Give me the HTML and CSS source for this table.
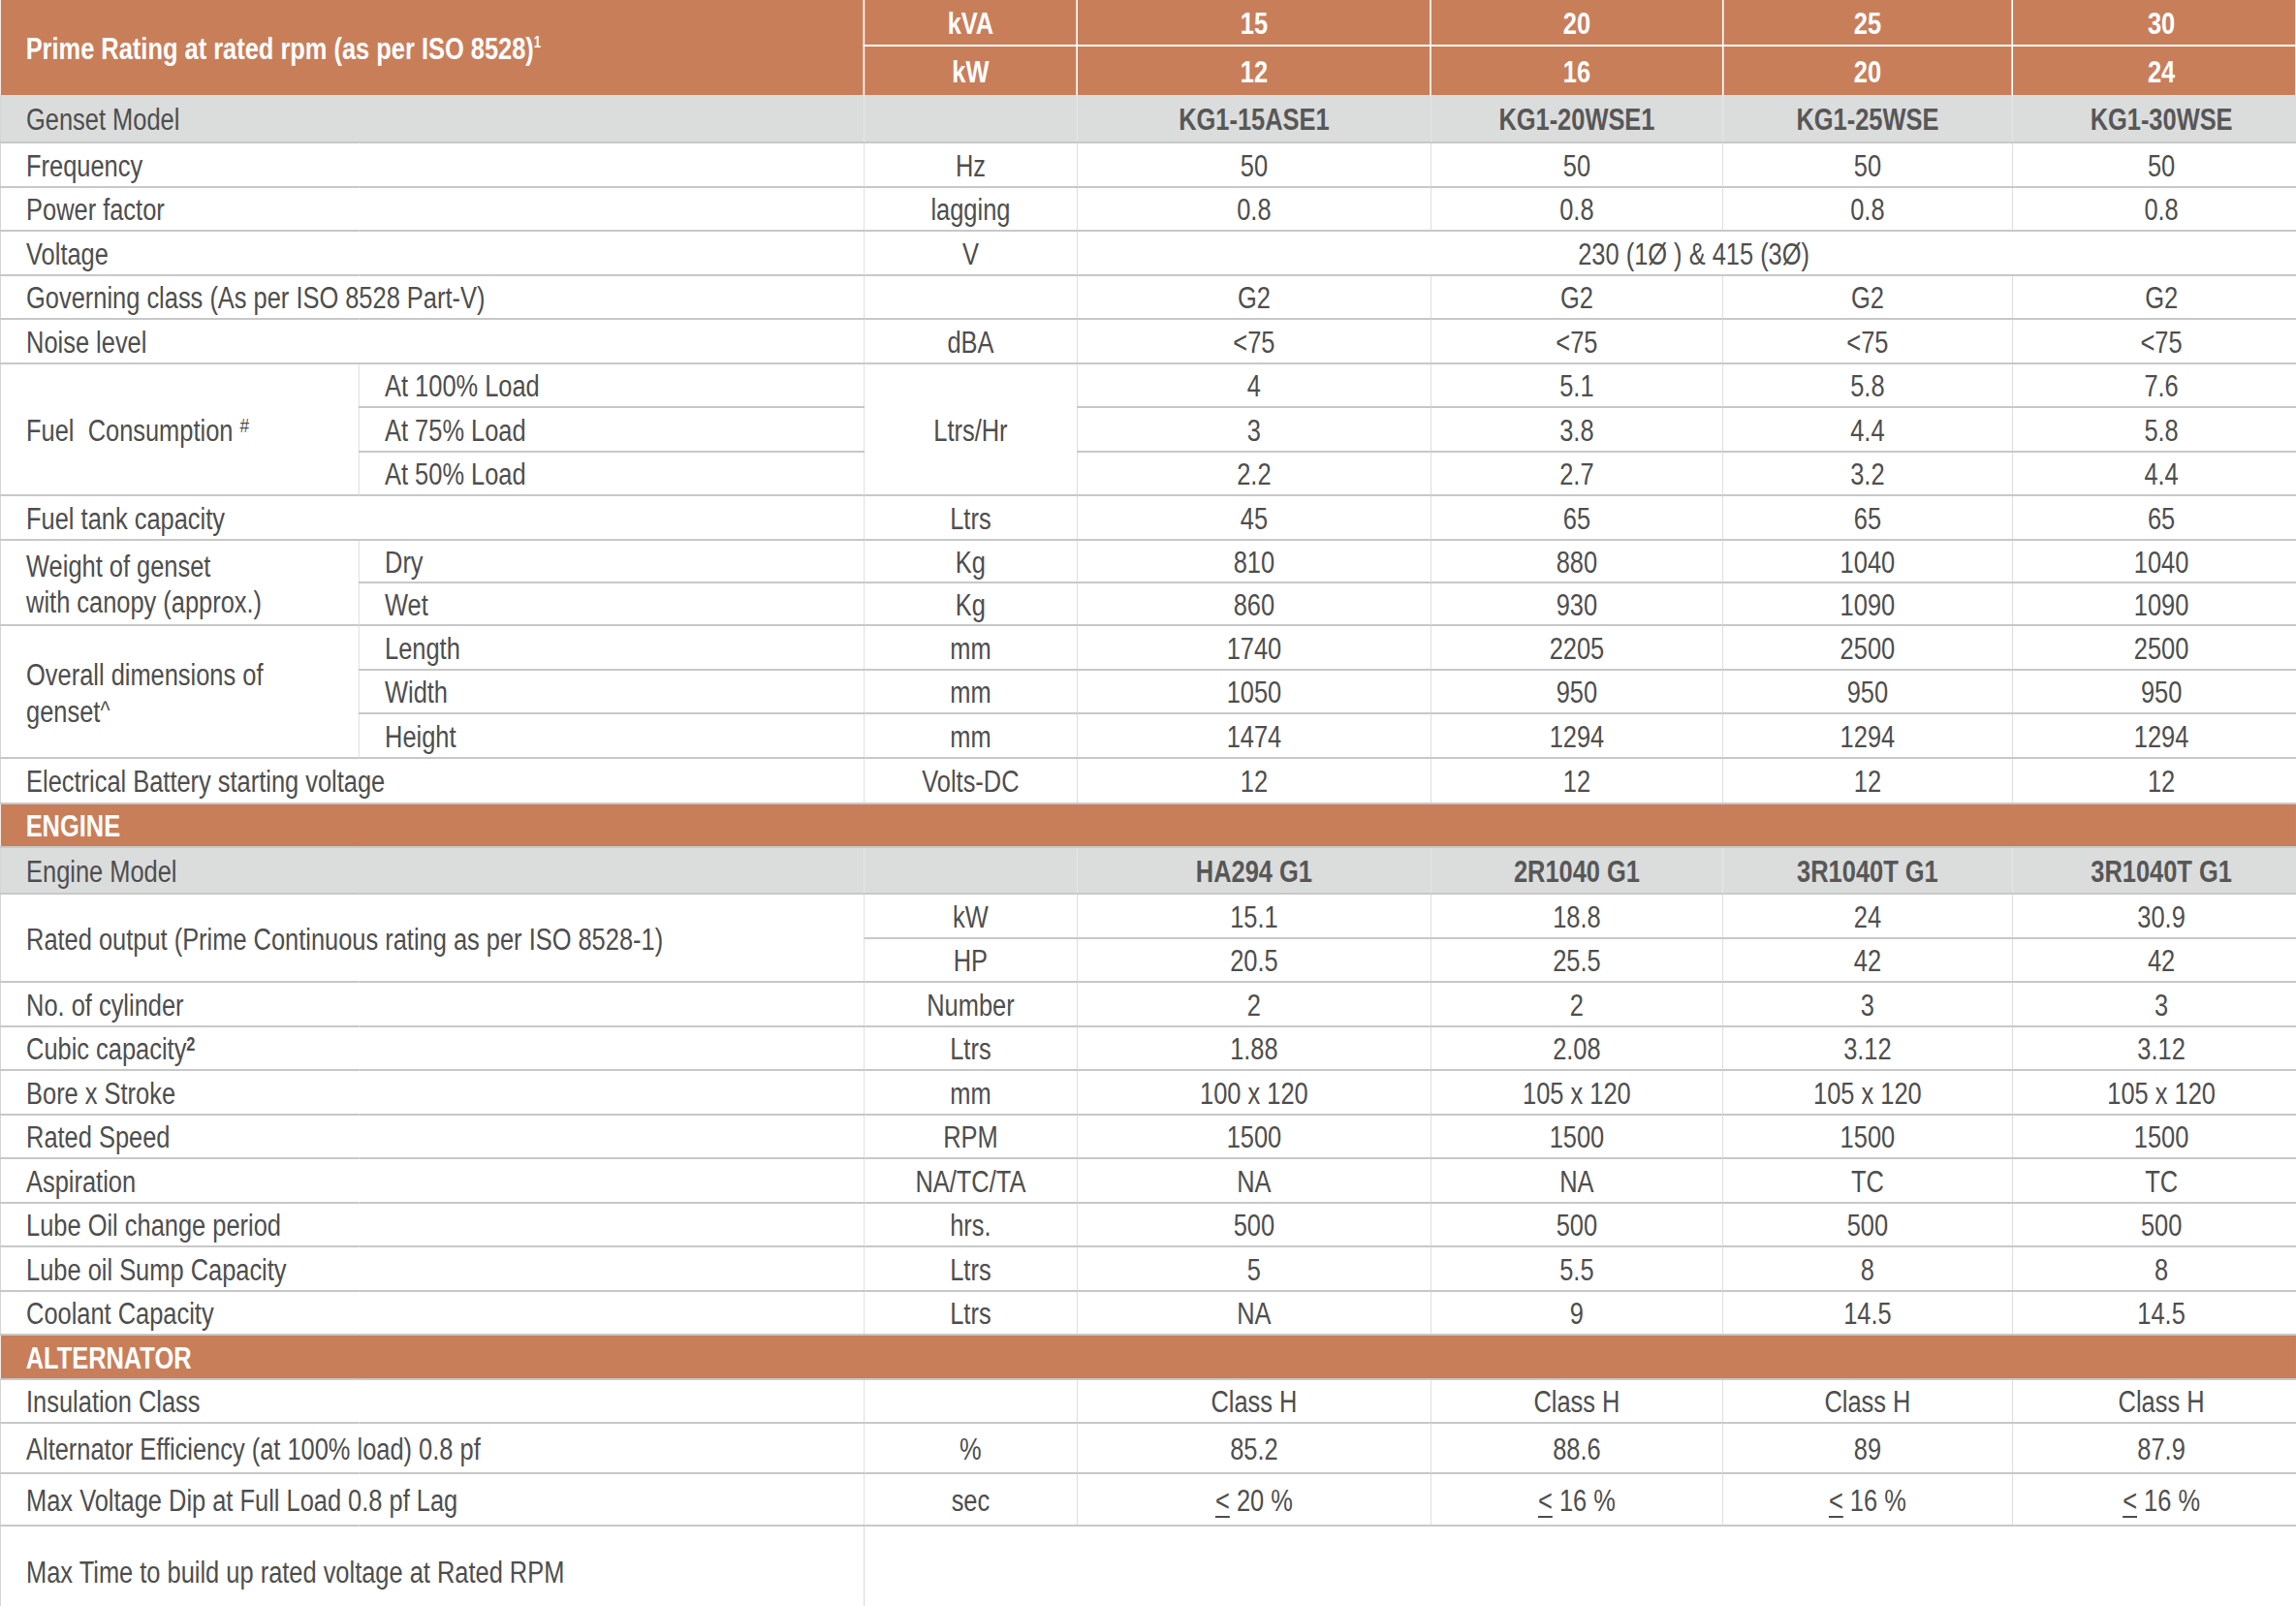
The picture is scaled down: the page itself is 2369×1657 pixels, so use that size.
FILE: index.html
```html
<!DOCTYPE html>
<html lang="en">
<head>
<meta charset="utf-8">
<title>Genset Specifications</title>
<link rel="stylesheet" href="styles.css">
</head>
<body>
<div class="sheet">
<table class="spec">
  <colgroup>
    <col class="c-la"><col class="c-lb"><col class="c-unit">
    <col class="c-v1"><col class="c-v2"><col class="c-v3"><col class="c-v4">
  </colgroup>
  <tbody>
    <tr class="head r-h1">
      <th class="lbl" colspan="2" rowspan="2">Prime Rating at rated rpm (as per ISO 8528)<sup>1</sup></th>
      <th>kVA</th><th>15</th><th>20</th><th>25</th><th>30</th>
    </tr>
    <tr class="head r-h2">
      <th>kW</th><th>12</th><th>16</th><th>20</th><th>24</th>
    </tr>
    <tr class="model r-model">
      <td class="lbl" colspan="2">Genset Model</td><td></td>
      <td class="b">KG1-15ASE1</td><td class="b">KG1-20WSE1</td><td class="b">KG1-25WSE</td><td class="b">KG1-30WSE</td>
    </tr>
    <tr class="r"><td class="lbl" colspan="2">Frequency</td><td>Hz</td><td>50</td><td>50</td><td>50</td><td>50</td></tr>
    <tr class="r"><td class="lbl" colspan="2">Power factor</td><td>lagging</td><td>0.8</td><td>0.8</td><td>0.8</td><td>0.8</td></tr>
    <tr class="r"><td class="lbl" colspan="2">Voltage</td><td>V</td><td colspan="4">230 (1Ø ) &amp; 415 (3Ø)</td></tr>
    <tr class="r"><td class="lbl" colspan="2">Governing class (As per ISO 8528 Part-V)</td><td></td><td>G2</td><td>G2</td><td>G2</td><td>G2</td></tr>
    <tr class="r"><td class="lbl" colspan="2">Noise level</td><td>dBA</td><td>&lt;75</td><td>&lt;75</td><td>&lt;75</td><td>&lt;75</td></tr>
    <tr class="r">
      <td class="lbl" rowspan="3">Fuel&nbsp; Consumption <sup class="hash">#</sup></td>
      <td class="lbl">At 100% Load</td><td rowspan="3">Ltrs/Hr</td>
      <td>4</td><td>5.1</td><td>5.8</td><td>7.6</td>
    </tr>
    <tr class="r"><td class="lbl">At 75% Load</td><td>3</td><td>3.8</td><td>4.4</td><td>5.8</td></tr>
    <tr class="r"><td class="lbl">At 50% Load</td><td>2.2</td><td>2.7</td><td>3.2</td><td>4.4</td></tr>
    <tr class="r"><td class="lbl" colspan="2">Fuel tank capacity</td><td>Ltrs</td><td>45</td><td>65</td><td>65</td><td>65</td></tr>
    <tr class="r-dry">
      <td class="lbl wrap" rowspan="2">Weight of genset<br>with canopy (approx.)</td>
      <td class="lbl">Dry</td><td>Kg</td><td>810</td><td>880</td><td>1040</td><td>1040</td>
    </tr>
    <tr class="r-wet"><td class="lbl">Wet</td><td>Kg</td><td>860</td><td>930</td><td>1090</td><td>1090</td></tr>
    <tr class="r">
      <td class="lbl wrap" rowspan="3">Overall dimensions of<br>genset<span class="caret">^</span></td>
      <td class="lbl">Length</td><td>mm</td><td>1740</td><td>2205</td><td>2500</td><td>2500</td>
    </tr>
    <tr class="r"><td class="lbl">Width</td><td>mm</td><td>1050</td><td>950</td><td>950</td><td>950</td></tr>
    <tr class="r"><td class="lbl">Height</td><td>mm</td><td>1474</td><td>1294</td><td>1294</td><td>1294</td></tr>
    <tr class="r-batt"><td class="lbl" colspan="2">Electrical Battery starting voltage</td><td>Volts-DC</td><td>12</td><td>12</td><td>12</td><td>12</td></tr>

    <tr class="band r"><th class="lbl" colspan="7">ENGINE</th></tr>
    <tr class="model r-emodel">
      <td class="lbl" colspan="2">Engine Model</td><td></td>
      <td class="b">HA294 G1</td><td class="b">2R1040 G1</td><td class="b">3R1040T G1</td><td class="b">3R1040T G1</td>
    </tr>
    <tr class="r">
      <td class="lbl" colspan="2" rowspan="2">Rated output (Prime Continuous rating as per ISO 8528-1)</td>
      <td>kW</td><td>15.1</td><td>18.8</td><td>24</td><td>30.9</td>
    </tr>
    <tr class="r"><td>HP</td><td>20.5</td><td>25.5</td><td>42</td><td>42</td></tr>
    <tr class="r"><td class="lbl" colspan="2">No. of cylinder</td><td>Number</td><td>2</td><td>2</td><td>3</td><td>3</td></tr>
    <tr class="r"><td class="lbl" colspan="2">Cubic capacity<sup class="two">2</sup></td><td>Ltrs</td><td>1.88</td><td>2.08</td><td>3.12</td><td>3.12</td></tr>
    <tr class="r"><td class="lbl" colspan="2">Bore x Stroke</td><td>mm</td><td>100 x 120</td><td>105 x 120</td><td>105 x 120</td><td>105 x 120</td></tr>
    <tr class="r"><td class="lbl" colspan="2">Rated Speed</td><td>RPM</td><td>1500</td><td>1500</td><td>1500</td><td>1500</td></tr>
    <tr class="r"><td class="lbl" colspan="2">Aspiration</td><td>NA/TC/TA</td><td>NA</td><td>NA</td><td>TC</td><td>TC</td></tr>
    <tr class="r"><td class="lbl" colspan="2">Lube Oil change period</td><td>hrs.</td><td>500</td><td>500</td><td>500</td><td>500</td></tr>
    <tr class="r"><td class="lbl" colspan="2">Lube oil Sump Capacity</td><td>Ltrs</td><td>5</td><td>5.5</td><td>8</td><td>8</td></tr>
    <tr class="r"><td class="lbl" colspan="2">Coolant Capacity</td><td>Ltrs</td><td>NA</td><td>9</td><td>14.5</td><td>14.5</td></tr>

    <tr class="band r"><th class="lbl" colspan="7">ALTERNATOR</th></tr>
    <tr class="r"><td class="lbl" colspan="2">Insulation Class</td><td></td><td>Class H</td><td>Class H</td><td>Class H</td><td>Class H</td></tr>
    <tr class="r-eff"><td class="lbl" colspan="2">Alternator Efficiency (at 100% load) 0.8 pf</td><td>%</td><td>85.2</td><td>88.6</td><td>89</td><td>87.9</td></tr>
    <tr class="r-dip"><td class="lbl" colspan="2">Max Voltage Dip at Full Load 0.8 pf Lag</td><td>sec</td>
      <td><span class="le">&lt;</span> 20 %</td><td><span class="le">&lt;</span> 16 %</td><td><span class="le">&lt;</span> 16 %</td><td><span class="le">&lt;</span> 16 %</td></tr>
    <tr class="r-time"><td class="lbl last" colspan="2">Max Time to build up rated voltage at Rated RPM</td><td class="empty" colspan="5"></td></tr>
  </tbody>
</table>
</div>
</body>
</html>
```

FILE: styles.css
```css
html, body {
  margin: 0;
  padding: 0;
  background: #ffffff;
  overflow: hidden;
}

body {
  font-family: "Liberation Sans", Arial, sans-serif;
  font-size: 31px;
  color: #4e4e4e;
}

.sheet {
  width: 2369px;
  overflow: hidden;
}

/* The reference uses a condensed face; the sheet is laid out wide and
   narrowed horizontally so the Arial-metric text reads condensed. */
.spec {
  width: 2888.6px;
  table-layout: fixed;
  border-collapse: collapse;
  border-spacing: 0;
  transform: scaleX(0.82);
  transform-origin: 0 0;
}

.c-la { width: 451.2px; }
.c-lb { width: 635.4px; }
.c-unit { width: 268.3px; }
.c-v1 { width: 445.1px; }
.c-v2 { width: 367.1px; }
.c-v3 { width: 364.6px; }
.c-v4 { width: 356.9px; }

.spec td,
.spec th {
  padding: 4px 0 0 0;
  text-align: center;
  vertical-align: middle;
  font-weight: normal;
  white-space: nowrap;
  border-bottom: 2px solid #c8c8c8;
  border-right: 1px solid #d6d6d6;
  line-height: 32px;
}

.spec tr > td:last-child:not(.lbl),
.spec tr > th:last-child:not(.lbl) {
  padding-left: 18px;
}

.spec td.lbl,
.spec th.lbl {
  text-align: left;
  padding-left: 32px;
  border-left: 1px solid #cdcdcd;
}

.spec td.wrap {
  white-space: normal;
  line-height: 37px;
}

/* header */
.head th {
  background: #c97e5a;
  color: #ffffff;
  font-weight: bold;
  border-bottom: 2px solid #ffffff;
  border-right: 2px solid #ffffff;
}
.head th.lbl {
  border-left: none;
  border-bottom: none;
}
.r-h1 { height: 47px; }
.r-h2 { height: 51px; }
.r-h2 th { border-bottom: none; }
.head sup {
  font-size: 16px;
  vertical-align: 12px;
  line-height: 0;
}

/* grey model rows */
.model td {
  background: #dbdcdc;
  border-right-color: #e8e8e8;
}
.model td.b {
  font-weight: bold;
  color: #575757;
}
.r-model { height: 49px; }
.r-emodel { height: 48px; }

/* section bands */
.band th {
  background: #c97e5a;
  color: #ffffff;
  font-weight: bold;
  border-bottom: 2px solid #c9c9c9;
  border-right: none;
}
.band th.lbl { border-left: none; }

.r { height: 45.5px; }
.r-dry { height: 44px; }
.r-wet { height: 44.5px; }
.r-batt { height: 47px; }
.r-eff { height: 52px; }
.r-dip { height: 54px; }
.r-time { height: 92px; }

.spec td.empty {
  border: none;
}
.spec td.last {
  border-bottom: none;
  border-right: 1px solid #cdcdcd;
}

sup.hash {
  font-size: 21px;
  vertical-align: 9px;
  line-height: 0;
}
sup.two {
  font-size: 20px;
  font-weight: bold;
  vertical-align: 9px;
  line-height: 0;
}
.caret {
  font-size: 26px;
  vertical-align: 3px;
}

.le {
  text-decoration: underline;
  text-decoration-thickness: 2px;
  text-underline-offset: 5px;
}
```
